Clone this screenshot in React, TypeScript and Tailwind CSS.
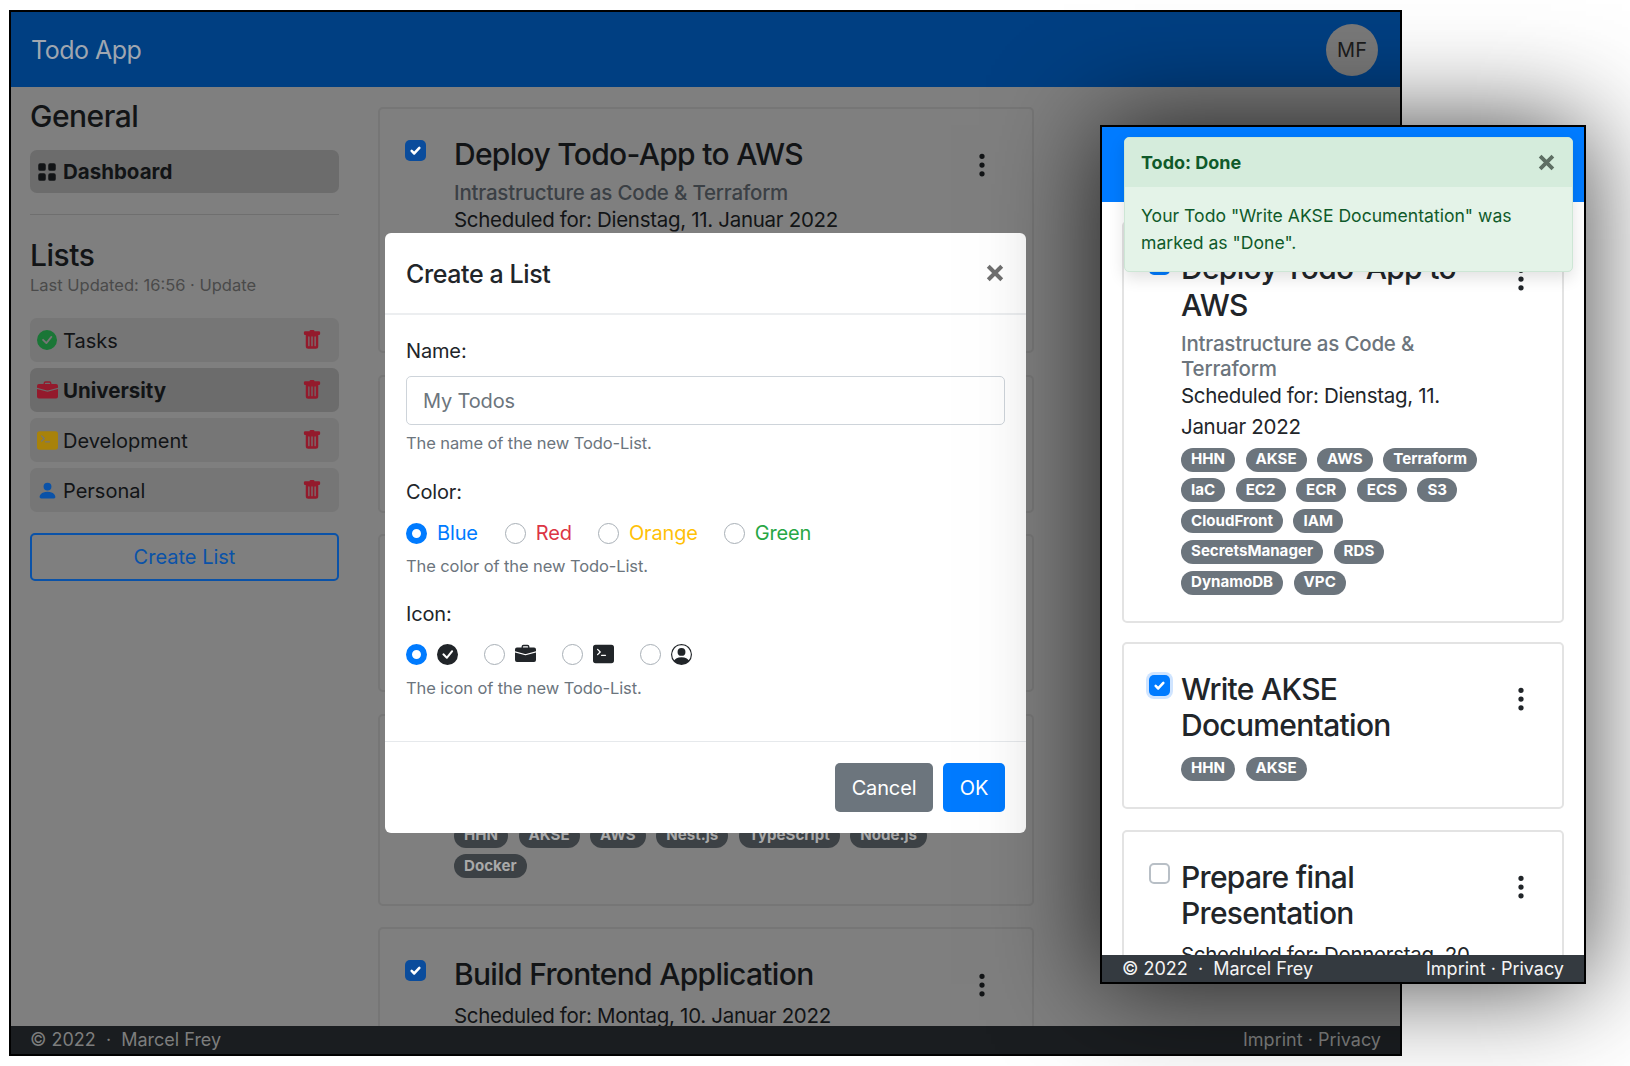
import type { ReactNode } from 'react';
import {
  BsBriefcaseFill,
  BsCheckCircleFill,
  BsGridFill,
  BsPersonCircle,
  BsPersonFill,
  BsTerminalFill,
  BsThreeDotsVertical,
  BsTrashFill,
} from 'react-icons/bs';

const awsTags = ['HHN', 'AKSE', 'AWS', 'Terraform', 'IaC', 'EC2', 'ECR', 'ECS', 'S3', 'CloudFront', 'IAM', 'SecretsManager', 'RDS', 'DynamoDB', 'VPC'];

const dimTheme = {
  card: 'border-[#767676] pl-[25px]',
  checkCol: 'w-[49px]',
  dotsCol: 'mr-[18px]',
  title: 'text-[#121416]',
  sub: 'text-[#3b4045]',
  text: 'text-[#121416]',
  tag: 'bg-[#3c4145] text-[#a9a9a9]',
  box: 'bg-[#0a4c9c]',
  boxOff: 'border-[#5f5f5f]',
  dots: 'text-[#121416]',
};

const lightTheme = {
  card: 'border-[#e3e3e3] pl-[25px]',
  checkCol: 'w-[32px]',
  dotsCol: 'mr-[9px]',
  title: 'text-[#212529]',
  sub: 'text-[#6c757d]',
  text: 'text-[#212529]',
  tag: 'bg-[#6c757d] text-white',
  box: 'bg-[#007bff]',
  boxOff: 'border-[#b8bfc6] bg-white',
  dots: 'text-[#212529]',
};

type Theme = typeof lightTheme;

function Check({ className }: { className?: string }) {
  return (
    <svg viewBox="0 0 20 20" className={className} fill="none" stroke="currentColor" strokeWidth="3" strokeLinecap="round" strokeLinejoin="round">
      <path d="M5.5 10.5l3 3 6-6.5" />
    </svg>
  );
}

function CloseIcon({ className }: { className?: string }) {
  return (
    <svg viewBox="0 0 16 16" className={className} fill="none" stroke="currentColor" strokeWidth="3.6">
      <path d="M2 2l12 12M14 2L2 14" />
    </svg>
  );
}

function TodoCard({
  theme,
  title,
  subtitle,
  scheduled,
  tags,
  checked,
  focused,
  className,
}: {
  theme: Theme;
  title: string;
  subtitle?: string;
  scheduled?: string;
  tags?: string[];
  checked?: boolean;
  focused?: boolean;
  className?: string;
}) {
  return (
    <div className={`flex shrink-0 rounded-[5px] border-2 pt-[27px] pb-[26px] ${theme.card} ${className ?? ''}`}>
      <div className={`shrink-0 pt-1 ${theme.checkCol}`}>
        {checked ? (
          <div className={`flex h-[21px] w-[21px] items-center justify-center rounded-[5px] text-white ${theme.box} ${focused ? 'shadow-[0_0_0_3px_#cfe4ff]' : ''}`}>
            <Check className="h-[17px] w-[17px]" />
          </div>
        ) : (
          <div className={`h-[21px] w-[21px] rounded-[5px] border-2 ${theme.boxOff}`} />
        )}
      </div>
      <div className="min-w-0 flex-1">
        <h3 className={`mb-[7.5px] text-[30px] leading-[36.5px] font-medium tracking-[-0.7px] ${theme.title}`}>{title}</h3>
        {subtitle && <p className={`-mb-px text-[20.5px] leading-[25px] font-medium tracking-[-0.2px] ${theme.sub}`}>{subtitle}</p>}
        {scheduled && <p className={`text-[20.5px] leading-[31px] tracking-[-0.3px] ${theme.text}`}>{scheduled}</p>}
        {tags && (
          <div className={`${scheduled ? 'mt-[6px]' : 'mt-[13px]'} flex flex-wrap gap-x-[10.5px] gap-y-[6.75px]`}>
            {tags.map((tag) => (
              <span key={tag} className={`flex h-6 items-center rounded-full px-[10px] text-[15.1px] font-bold ${theme.tag}`}>
                {tag}
              </span>
            ))}
          </div>
        )}
      </div>
      <div className={`flex w-[64px] shrink-0 justify-center pt-[14.5px] ${theme.dotsCol} ${theme.dots}`}>
        <BsThreeDotsVertical size={28} />
      </div>
    </div>
  );
}

function ListRow({ icon, label, active }: { icon: ReactNode; label: string; active?: boolean }) {
  return (
    <div className={`flex h-11 items-center rounded-[7px] pl-[7px] pr-[17px] text-[#121416] ${active ? 'bg-[#6c6c6c] text-[20.5px] font-bold' : 'bg-[#767676] text-[20px]'}`}>
      <span className="flex w-[26px] shrink-0 justify-start">{icon}</span>
      <span className="flex-1 pt-[2px]">{label}</span>
      <BsTrashFill size={20} className="text-[#941a2c]" />
    </div>
  );
}

function Radio({ on }: { on?: boolean }) {
  return on ? (
    <span className="h-[21px] w-[21px] shrink-0 rounded-full border-[6px] border-[#007bff] bg-white" />
  ) : (
    <span className="h-[21px] w-[21px] shrink-0 rounded-full border border-[#a8afb6] bg-white" />
  );
}

function Help({ children }: { children: ReactNode }) {
  return <p className="text-[16.5px] leading-[24px] tracking-[-0.1px] text-[#6c757d]">{children}</p>;
}

function CreateListModal() {
  return (
    <div className="absolute left-[374px] top-[221px] flex h-[600px] w-[641px] flex-col rounded-[6px] bg-white text-[20px] tracking-[-0.15px] text-[#212529]">
      <div className="flex h-[82px] shrink-0 items-center justify-between border-b-2 border-[#eceef0] pl-[21px] pr-[22px]">
        <h2 className="pt-1 text-[25px] font-medium tracking-[-0.4px]">Create a List</h2>
        <CloseIcon className="h-[18px] w-[18px] text-[#6f6f6f]" />
      </div>
      <div className="flex-1 px-[21px] pt-[22px]">
        <label className="block leading-[28px]">Name:</label>
        <div className="mt-[11px] flex h-[49px] items-center rounded-[5px] border-[1.5px] border-[#ced4da] px-[16px] text-[#6c757d]">My Todos</div>
        <div className="mt-[6px]"><Help>The name of the new Todo-List.</Help></div>
        <label className="mt-[23px] block leading-[28px]">Color:</label>
        <div className="mt-[12px] flex h-[30px] items-center">
          <Radio on />
          <span className="ml-[10px] mr-[27px] text-[#007bff]">Blue</span>
          <Radio />
          <span className="ml-[10px] mr-[26px] text-[#dc3545]">Red</span>
          <Radio />
          <span className="ml-[10px] mr-[26px] text-[#ffc107]">Orange</span>
          <Radio />
          <span className="ml-[10px] text-[#28a745]">Green</span>
        </div>
        <div className="mt-[6px]"><Help>The color of the new Todo-List.</Help></div>
        <label className="mt-[22px] block leading-[28px]">Icon:</label>
        <div className="mt-[11px] flex h-[30px] items-center">
          <Radio on />
          <span className="ml-[10px] mr-[26px] flex w-[21px]"><BsCheckCircleFill size={21} /></span>
          <Radio />
          <span className="ml-[10px] mr-[26px] flex w-[21px]"><BsBriefcaseFill size={22} /></span>
          <Radio />
          <span className="ml-[10px] mr-[26px] flex w-[21px]"><BsTerminalFill size={22} /></span>
          <Radio />
          <span className="ml-[10px] flex w-[21px]"><BsPersonCircle size={21} /></span>
        </div>
        <div className="mt-[7px]"><Help>The icon of the new Todo-List.</Help></div>
      </div>
      <div className="flex h-[92px] shrink-0 items-start justify-end gap-[10px] border-t border-[#e6e9ec] pr-[21px] pt-[21px] text-white">
        <button className="h-[49px] w-[98px] rounded-[5px] bg-[#6c757d]">Cancel</button>
        <button className="h-[49px] w-[62px] rounded-[5px] bg-[#007bff]">OK</button>
      </div>
    </div>
  );
}

function MainWindow() {
  return (
    <div className="absolute left-[9px] top-[10px] flex h-[1046px] w-[1393px] flex-col overflow-hidden border-2 border-black bg-[#7f7f7f]">
      <header className="flex h-[75px] shrink-0 items-center justify-between bg-[#003f82] pl-[20px] pr-[22px]">
        <span className="pt-[3px] text-[25px] tracking-[-0.5px] text-[#9fa6b0]">Todo App</span>
        <div className="flex h-[52px] w-[52px] items-center justify-center rounded-full bg-[#7a7a7a] text-[20px] text-[#1c1c1c]">MF</div>
      </header>
      <div className="flex min-h-0 flex-1 overflow-hidden">
        <aside className="w-[347px] shrink-0 px-[19px] pt-[10px]">
          <h2 className="text-[30px] leading-[38px] font-medium tracking-[-0.5px] text-[#121416]">General</h2>
          <div className="mt-[15px] flex h-[43px] items-center rounded-[7px] bg-[#6c6c6c] pl-[7px] text-[20.5px] font-bold text-[#121416]">
            <BsGridFill size={20} className="mr-[6px]" />
            <span className="pt-[1.5px]">Dashboard</span>
          </div>
          <div className="mt-[21px] h-px bg-[#6f6f6f]" />
          <h2 className="mt-[21px] text-[30px] leading-[38px] font-medium tracking-[-0.5px] text-[#121416]">Lists</h2>
          <p className="text-[16.5px] leading-[22px] text-[#4a4a4a]">Last Updated: 16:56 · Update</p>
          <div className="mt-[22px] flex flex-col gap-[6px]">
            <ListRow icon={<BsCheckCircleFill size={20} className="text-[#1a7636]" />} label="Tasks" />
            <ListRow active icon={<BsBriefcaseFill size={21} className="text-[#941a2c]" />} label="University" />
            <ListRow icon={<BsTerminalFill size={21} className="text-[#a8820a]" />} label="Development" />
            <ListRow icon={<BsPersonFill size={21} className="text-[#0a52a8]" />} label="Personal" />
          </div>
          <button className="mt-[21px] h-[48px] w-full rounded-[5px] border-2 border-[#0a52a8] text-[20px] text-[#0a52a8]">Create List</button>
        </aside>
        <main className="flex w-[676px] shrink-0 flex-col gap-[21.5px] pl-[20px] pt-[20px]">
          <TodoCard theme={dimTheme} checked title="Deploy Todo-App to AWS" subtitle="Intrastructure as Code & Terraform" scheduled="Scheduled for: Dienstag, 11. Januar 2022" tags={awsTags} className="h-[246px]" />
          <TodoCard theme={dimTheme} checked title="Write AKSE Documentation" tags={['HHN', 'AKSE']} className="h-[138px]" />
          <TodoCard theme={dimTheme} title="Prepare final Presentation" scheduled="Scheduled for: Donnerstag, 20. Januar 2022" tags={['HHN', 'AKSE']} className="h-[158px]" />
          <TodoCard theme={dimTheme} checked title="Build Backend Application" scheduled="Scheduled for: Sonntag, 9. Januar 2022" tags={['HHN', 'AKSE', 'AWS', 'Nest.js', 'TypeScript', 'Node.js', 'Docker']} className="h-[192px]" />
          <TodoCard theme={dimTheme} checked title="Build Frontend Application" scheduled="Scheduled for: Montag, 10. Januar 2022" />
        </main>
      </div>
      <footer className="flex h-[28px] shrink-0 items-center justify-between bg-[#1a1d20] px-[19px] pb-px text-[18px] text-[#7d7d7d]">
        <span>© 2022 &nbsp;·&nbsp; Marcel Frey</span>
        <span>Imprint · Privacy</span>
      </footer>
      <CreateListModal />
    </div>
  );
}

function MobileWindow() {
  return (
    <div className="absolute left-[1100px] top-[125px] flex h-[859px] w-[486px] flex-col overflow-hidden border-2 border-black bg-white shadow-[0_0_100px_rgba(0,0,0,0.75)]">
      <div className="h-[75px] shrink-0 bg-[#007bff]" />
      <div className="flex min-h-0 flex-1 flex-col gap-[21px] overflow-hidden px-[20px] pt-[19px]">
        <TodoCard theme={lightTheme} checked title="Deploy Todo-App to AWS" subtitle="Intrastructure as Code & Terraform" scheduled="Scheduled for: Dienstag, 11. Januar 2022" tags={awsTags} />
        <TodoCard theme={lightTheme} checked focused title="Write AKSE Documentation" tags={['HHN', 'AKSE']} className="-mt-[2px]" />
        <TodoCard theme={lightTheme} title="Prepare final Presentation" scheduled="Scheduled for: Donnerstag, 20. Januar 2022" tags={['HHN', 'AKSE']} />
      </div>
      <footer className="flex h-[27px] shrink-0 items-center justify-between bg-[#343a40] px-[20px] text-[18px] text-[#f4f4f4]">
        <span>© 2022 &nbsp;·&nbsp; Marcel Frey</span>
        <span>Imprint · Privacy</span>
      </footer>
      <div className="absolute left-[22px] top-[10px] w-[449px] overflow-hidden rounded-[5px] border border-[#cde6d5] bg-[#e4f3e8] text-[#0f5a2a] shadow-[0_6px_16px_rgba(0,0,0,0.12)]">
        <div className="flex h-[49px] items-center justify-between bg-[#d5ecdc] pl-[16px] pr-[17px] text-[18px] font-bold">
          Todo: Done
          <CloseIcon className="h-[17px] w-[17px] text-[#5f6f64]" />
        </div>
        <p className="px-[16px] pt-[15px] pb-[15px] text-[17.6px] leading-[27px]">Your Todo "Write AKSE Documentation" was marked as "Done".</p>
      </div>
    </div>
  );
}

export default function App() {
  return (
    <div className="relative h-[1066px] w-[1630px] overflow-hidden bg-white [font-family:Inter,'Liberation_Sans',sans-serif]">
      <MainWindow />
      <MobileWindow />
    </div>
  );
}
